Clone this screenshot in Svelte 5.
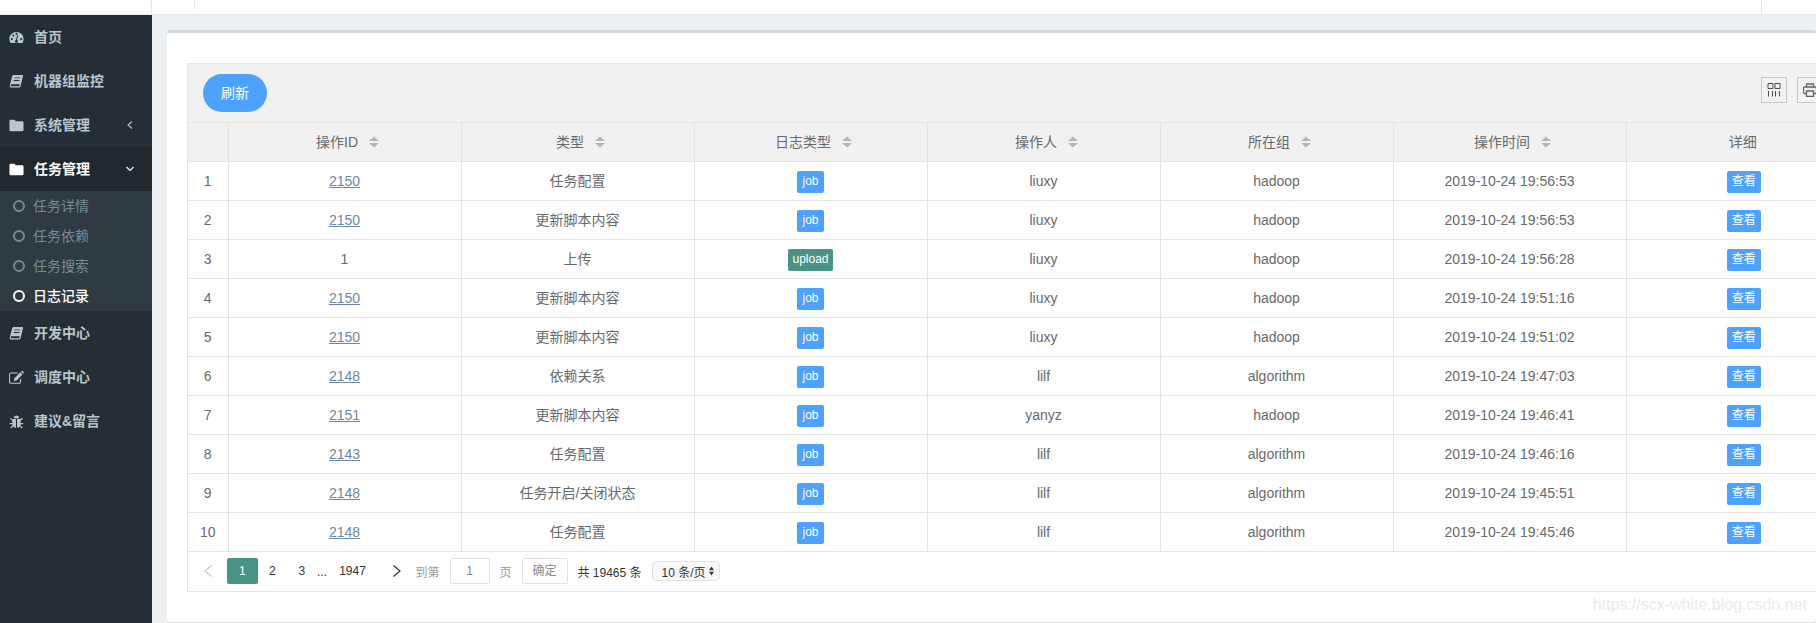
<script lang="ts">
  const menuTop = [
    { label: '首页', icon: 'gauge' },
    { label: '机器组监控', icon: 'book' },
    { label: '系统管理', icon: 'folder', arrow: 'left' },
    { label: '任务管理', icon: 'folder', arrow: 'down', open: true }
  ];
  const subItems = [
    { label: '任务详情' },
    { label: '任务依赖' },
    { label: '任务搜索' },
    { label: '日志记录', active: true }
  ];
  const menuBottom = [
    { label: '开发中心', icon: 'book' },
    { label: '调度中心', icon: 'edit' },
    { label: '建议&留言', icon: 'bug' }
  ];

  const columns = [
    { label: '操作ID', sort: true },
    { label: '类型', sort: true },
    { label: '日志类型', sort: true },
    { label: '操作人', sort: true },
    { label: '所在组', sort: true },
    { label: '操作时间', sort: true },
    { label: '详细', sort: false }
  ];

  const rows = [
    { id: '2150', link: true, type: '任务配置', log: 'job', user: 'liuxy', group: 'hadoop', time: '2019-10-24 19:56:53' },
    { id: '2150', link: true, type: '更新脚本内容', log: 'job', user: 'liuxy', group: 'hadoop', time: '2019-10-24 19:56:53' },
    { id: '1', link: false, type: '上传', log: 'upload', user: 'liuxy', group: 'hadoop', time: '2019-10-24 19:56:28' },
    { id: '2150', link: true, type: '更新脚本内容', log: 'job', user: 'liuxy', group: 'hadoop', time: '2019-10-24 19:51:16' },
    { id: '2150', link: true, type: '更新脚本内容', log: 'job', user: 'liuxy', group: 'hadoop', time: '2019-10-24 19:51:02' },
    { id: '2148', link: true, type: '依赖关系', log: 'job', user: 'lilf', group: 'algorithm', time: '2019-10-24 19:47:03' },
    { id: '2151', link: true, type: '更新脚本内容', log: 'job', user: 'yanyz', group: 'hadoop', time: '2019-10-24 19:46:41' },
    { id: '2143', link: true, type: '任务配置', log: 'job', user: 'lilf', group: 'algorithm', time: '2019-10-24 19:46:16' },
    { id: '2148', link: true, type: '任务开启/关闭状态', log: 'job', user: 'lilf', group: 'algorithm', time: '2019-10-24 19:45:51' },
    { id: '2148', link: true, type: '任务配置', log: 'job', user: 'lilf', group: 'algorithm', time: '2019-10-24 19:45:46' }
  ];
</script>

{#snippet menuIcon(name)}
  <svg class="mi" viewBox="0 0 16 16" aria-hidden="true">
    {#if name === 'gauge'}
      <path fill="currentColor" fill-rule="evenodd" d="M8 2C3.600 2 .4 5.400.4 9.600c0 1.400.3 2.600 1 3.800.1.200.4.400.7.400h11.800c.3 0 .6-.2.700-.4.700-1.200 1-2.400 1-3.800C15.600 5.400 12.400 2 8 2zM3 10.800a1.100 1.100 0 1 1 0-2.200 1.100 1.100 0 0 1 0 2.200zm1.600-3.900a1.100 1.100 0 1 1 0-2.200 1.100 1.100 0 0 1 0 2.200zm5 5.300c0 .9-.7 1.500-1.600 1.500s-1.600-.6-1.600-1.500c0-.7.400-1.300 1-1.500L8.800 5.200l1 .3-1.300 5.200c.7.200 1.100.8 1.100 1.500zM8 5.200A1.100 1.100 0 1 1 8 3a1.100 1.100 0 0 1 0 2.200zm5 5.600a1.100 1.100 0 1 1 0-2.200 1.100 1.100 0 0 1 0 2.200z" />
    {:else if name === 'book'}
      <path fill="currentColor" fill-rule="evenodd" d="M5.200 1h9c.6 0 .9.500.7 1l-2.600 11c-.2.900-.9 1.500-1.800 1.500H2.800C1.400 14.500.5 13.400.8 12L3.400 2.400C3.600 1.600 4.300 1 5.200 1zm.7 2.600-.3 1h6.200l.3-1zm-.8 2.800-.3 1H11l.3-1zM2.900 10.800c-.8 0-1.100.5-1.100 1 0 .6.400 1.200 1.100 1.200h7.600c.3 0 .5-.2.600-.5l.4-1.700z" />
    {:else if name === 'folder'}
      <path fill="currentColor" d="M1.800 1.800h3.600c.7 0 1.200.5 1.300 1.100l.2.600h7.300c.7 0 1.300.6 1.300 1.300v7.900c0 .7-.6 1.300-1.300 1.300H1.800c-.7 0-1.300-.6-1.300-1.300V3.100c0-.7.600-1.300 1.300-1.300z" />
    {:else if name === 'edit'}
      <path fill="none" stroke="currentColor" stroke-width="1.100" d="M12.300 9.700v3c0 .9-.7 1.500-1.500 1.500H2.100c-.9 0-1.500-.6-1.500-1.500V4.600c0-.9.600-1.500 1.500-1.500h7.200" />
      <path fill="currentColor" d="M5.800 8.800l6.300-6.300 2.300 2.300-6.300 6.300-2.800.5zM12.800 1.800l.7-.7c.3-.3.800-.3 1.100 0l1.100 1.100c.3.300.3.800 0 1.100l-.7.700z" />
    {:else}
      <path fill="currentColor" d="M5 4.400C5.200 2.800 6.500 1.600 8 1.600s2.800 1.200 3 2.800zM4 5.400h3.400v9.300c-1.200-.1-2.200-.6-2.900-1.400l-2.300 2.100-.8-.9 2.500-2.300c-.2-.4-.4-.9-.4-1.400H.8V9.600h2.700V7.300L1 5l.8-.8 2.200 2zM8.600 5.400H12l2.200-1.200.8.800-2.500 2.300v2.300h2.700v1.200h-2.700c0 .5-.2 1-.4 1.400l2.500 2.300-.8.900-2.300-2.100c-.7.800-1.700 1.300-2.900 1.400z" />
    {/if}
  </svg>
{/snippet}

{#snippet navItem(item)}
  <div class="nav-item" class:open={item.open}>
    {@render menuIcon(item.icon)}
    <span class="nav-label">{item.label}</span>
    {#if item.arrow}
      <svg class="nav-arrow" viewBox="0 0 10 10" aria-hidden="true">
        {#if item.arrow === 'left'}
          <path d="M7 1.500 3 5l4 3.500" />
        {:else}
          <path d="M1.500 3 5 6.500 8.500 3" />
        {/if}
      </svg>
    {/if}
  </div>
{/snippet}

{#snippet sortArrows()}
  <svg class="sort" viewBox="0 0 10 12" aria-hidden="true">
    <path d="M5 .5 10 5H0zM0 7h10l-5 4.500z" />
  </svg>
{/snippet}

<div class="page">
  <header class="topbar">
    <span class="tick tick-a"></span>
    <span class="tick tick-b"></span>
    <span class="tick tick-c"></span>
  </header>

  <div class="main">
    <aside class="sidebar">
      {#each menuTop as item}
        {@render navItem(item)}
      {/each}
      <div class="submenu">
        {#each subItems as sub}
          <div class="sub-item" class:active={sub.active}>
            <span class="ring"></span>
            <span class="sub-label">{sub.label}</span>
          </div>
        {/each}
      </div>
      {#each menuBottom as item}
        {@render navItem(item)}
      {/each}
    </aside>

    <section class="content">
      <div class="card">
        <div class="grid-box">
          <div class="toolbar">
            <button type="button" class="refresh">刷新</button>
            <div class="tools">
              <span class="tool">
                <svg viewBox="0 0 14 14" aria-hidden="true">
                  <path d="M1 .5h5v5H1zM8 .5h5v5H8zM1.500 8v5.500M5.500 8v5.500M8.500 8v5.500M12.500 8v5.500" />
                </svg>
              </span>
              <span class="tool print">
                <svg viewBox="0 0 14 14" aria-hidden="true">
                  <path d="M3.500 4V1h7v3M3.500 10.500h-2c-.6 0-1-.4-1-1V5c0-.6.4-1 1-1h11c.6 0 1 .4 1 1v4.500c0 .6-.4 1-1 1h-2M3.500 8h7v5.500h-7z" />
                </svg>
              </span>
            </div>
          </div>

          <table class="grid">
            <colgroup>
              <col class="col-index" />
              {#each columns as _}
                <col class="col-data" />
              {/each}
            </colgroup>
            <thead>
              <tr>
                <th></th>
                {#each columns as col}
                  <th>
                    <span class="th-in" class:sortable={col.sort}>
                      <span class="th-label">{col.label}</span>
                      {#if col.sort}{@render sortArrows()}{/if}
                    </span>
                  </th>
                {/each}
              </tr>
            </thead>
            <tbody>
              {#each rows as row, i}
                <tr>
                  <td class="index">{i + 1}</td>
                  <td>
                    {#if row.link}
                      <a href="#top" class="id-link">{row.id}</a>
                    {:else}
                      {row.id}
                    {/if}
                  </td>
                  <td class="cjk">{row.type}</td>
                  <td class="badge-cell">
                    <span class="tag" class:upload={row.log === 'upload'}>{row.log}</span>
                  </td>
                  <td>{row.user}</td>
                  <td>{row.group}</td>
                  <td>{row.time}</td>
                  <td class="badge-cell"><span class="view">查看</span></td>
                </tr>
              {/each}
            </tbody>
          </table>

          <div class="pager">
            <svg class="chev prev" viewBox="0 0 8 12" aria-hidden="true"><path d="M7.500.5 1 6l6.500 5.500" /></svg>
            <span class="pg current">1</span>
            <span class="pg">2</span>
            <span class="pg">3</span>
            <span class="dots">...</span>
            <span class="pg wide">1947</span>
            <svg class="chev next" viewBox="0 0 8 12" aria-hidden="true"><path d="M.5.500 7 6 .5 11.500" /></svg>
            <span class="muted goto">到第</span>
            <span class="page-input">1</span>
            <span class="muted page-word">页</span>
            <span class="confirm">确定</span>
            <span class="total">共 19465 条</span>
            <span class="size">
              10 条/页
              <svg viewBox="0 0 6 12" aria-hidden="true"><path d="M3 .5 6 5H0zM0 7h6l-3 4.500z" /></svg>
            </span>
          </div>
        </div>
      </div>
    </section>
  </div>

  <span class="watermark">https://scx-white.blog.csdn.net</span>
</div>

<style>
  :global(body) {
    margin: 0;
    overflow: hidden;
    background: #ecf0f3;
  }

  .page {
    position: relative;
    width: 1816px;
    height: 623px;
    overflow: hidden;
    font-family: "Liberation Sans", "Noto Sans CJK SC", sans-serif;
    font-size: 14px;
    color: #676a6c;
  }

  .topbar {
    position: relative;
    height: 15px;
    box-sizing: border-box;
    background: #fff;
    border-bottom: 1px solid #e4e6e8;
  }

  .tick {
    position: absolute;
    top: 0;
    width: 1px;
    background: #e9e9e9;
  }
  .tick-a { left: 151px; height: 15px; }
  .tick-b { left: 194px; height: 9px; }
  .tick-c { left: 1761px; height: 15px; }

  .main {
    display: flex;
    height: 608px;
  }

  .sidebar {
    flex: 0 0 152px;
    background: #252e35;
    color: #b8c7ce;
  }

  .nav-item {
    display: flex;
    align-items: center;
    height: 44px;
    padding-left: 9px;
    font-weight: 700;
  }
  .nav-item.open {
    background: #20282d;
    color: #fff;
  }

  .mi {
    flex: none;
    width: 15px;
    height: 15px;
  }

  /* Noto's CJK glyphs sit lower than the reference's, hence the bottom padding */
  .nav-label {
    margin-left: 10px;
    padding-bottom: 2px;
  }

  .nav-arrow {
    width: 10px;
    height: 10px;
    margin-left: auto;
    margin-right: 17px;
    fill: none;
    stroke: currentColor;
    stroke-width: 1.100;
  }

  .submenu {
    background: #2f3a41;
  }

  .sub-item {
    display: flex;
    align-items: center;
    height: 30px;
    padding-left: 13px;
    color: #778a94;
  }
  .sub-item.active {
    color: #fff;
    font-weight: 500;
  }

  .sub-label {
    padding-bottom: 2px;
  }

  .ring {
    width: 12px;
    height: 12px;
    box-sizing: border-box;
    margin-right: 8px;
    border: 2px solid currentColor;
    border-radius: 50%;
  }

  .content {
    flex: 1;
    min-width: 0;
    padding: 15px 0 0 15px;
  }

  .card {
    height: 592px;
    box-sizing: border-box;
    padding: 30px 0 0 20px;
    background: #fff;
    border-top: 3px solid #d2d6de;
    border-radius: 3px;
    overflow: hidden;
    box-shadow: 0 1px 1px #dcdcdc;
  }

  .grid-box {
    width: 1672px;
    border: 1px solid #e4e4e4;
    border-right: 0;
  }

  .toolbar {
    display: flex;
    align-items: center;
    justify-content: space-between;
    height: 59px;
    box-sizing: border-box;
    padding: 0 0 0 15px;
    background: #f1f1f1;
    border-bottom: 1px solid #e4e4e4;
  }

  .refresh {
    width: 64px;
    height: 38px;
    padding: 0 0 2px;
    border: 0;
    border-radius: 19px;
    background: #4da1ff;
    color: #fff;
    font: inherit;
  }

  .tools {
    display: flex;
    align-self: flex-start;
    gap: 10px;
    margin-top: 13px;
    /* the second tool runs past the window edge, as in the reference */
    margin-right: 37px;
  }

  .tool {
    display: flex;
    align-items: center;
    justify-content: center;
    width: 26px;
    height: 26px;
    box-sizing: border-box;
    border: 1px solid #c9c9c9;
  }
  .tool svg {
    width: 14px;
    height: 14px;
    fill: none;
    stroke: #4d4d4d;
    stroke-width: 1;
  }
  .tool.print svg {
    stroke: #666;
    stroke-width: 1.300;
  }

  .grid {
    width: 1671px;
    border-collapse: collapse;
    table-layout: fixed;
  }

  .col-index { width: 40px; }
  .col-data { width: 233px; }

  th, td {
    height: 39px;
    padding: 0;
    box-sizing: border-box;
    border-left: 1px solid #e4e4e4;
    border-bottom: 1px solid #e4e4e4;
    text-align: center;
    font-weight: 400;
    font-size: 14px;
  }
  th:first-child, td:first-child {
    border-left: 0;
  }
  thead th {
    height: 38px;
    background: #f1f1f1;
  }

  td.cjk {
    padding-bottom: 2px;
  }

  td.badge-cell {
    padding-top: 2px;
  }

  .th-in {
    display: inline-flex;
    align-items: center;
    gap: 11px;
  }
  .th-in.sortable {
    padding-left: 6px;
  }

  .th-label {
    padding-bottom: 2px;
  }

  .sort {
    width: 10px;
    height: 12px;
    fill: #b5b5b5;
  }

  .id-link {
    color: #6d87a8;
    text-decoration: underline;
  }

  .tag, .view {
    display: inline-block;
    vertical-align: middle;
    height: 22px;
    line-height: 21px;
    border-radius: 2px;
    background: #4da1ff;
    color: #fff;
    font-size: 12px;
  }
  .tag {
    padding: 0 5px;
  }
  .tag.upload {
    background: #499384;
    padding: 0 4px;
  }
  .view {
    margin-left: 2px;
    padding: 0 5px;
  }

  .pager {
    display: flex;
    align-items: center;
    height: 39px;
    font-size: 12px;
    color: #333;
    white-space: nowrap;
  }

  .chev {
    flex: none;
    width: 8px;
    height: 12px;
    fill: none;
    stroke-width: 1.200;
  }
  .chev.prev {
    margin: 0 15px 0 16px;
    stroke: #c9c9c9;
  }
  .chev.next {
    margin: 0 15px;
    stroke: #333;
  }

  .pg {
    width: 29.500px;
    height: 26px;
    line-height: 26px;
    text-align: center;
  }
  .pg.current {
    width: 30.500px;
    background: #499384;
    border-radius: 2px;
    color: #fff;
  }
  .pg.wide {
    width: 50px;
  }

  .dots {
    width: 11px;
    text-align: center;
    margin-top: 2px;
  }

  .muted {
    color: #999;
  }

  .goto {
    width: 24px;
  }

  .page-input, .confirm {
    height: 26px;
    line-height: 24px;
    box-sizing: border-box;
    border: 1px solid #e2e2e2;
    border-radius: 2px;
    text-align: center;
    color: #888;
    background: #fff;
  }
  .page-input {
    width: 40px;
    margin-left: 10px;
  }
  .page-word {
    margin: 0 10px;
  }
  .confirm {
    width: 46px;
  }
  .total {
    width: 64px;
    margin-left: 10px;
  }

  .size {
    display: flex;
    align-items: center;
    justify-content: space-between;
    width: 68px;
    height: 20px;
    box-sizing: border-box;
    margin-left: 10px;
    padding: 0 5px 0 9px;
    border: 1px solid #e2e2e2;
    border-radius: 5px;
    background: #f8f8f8;
  }
  .size svg {
    flex: none;
    width: 5px;
    height: 10px;
    fill: #333;
  }

  .watermark {
    position: absolute;
    right: 9px;
    top: 596px;
    font-size: 16px;
    color: #ebebeb;
  }
</style>
